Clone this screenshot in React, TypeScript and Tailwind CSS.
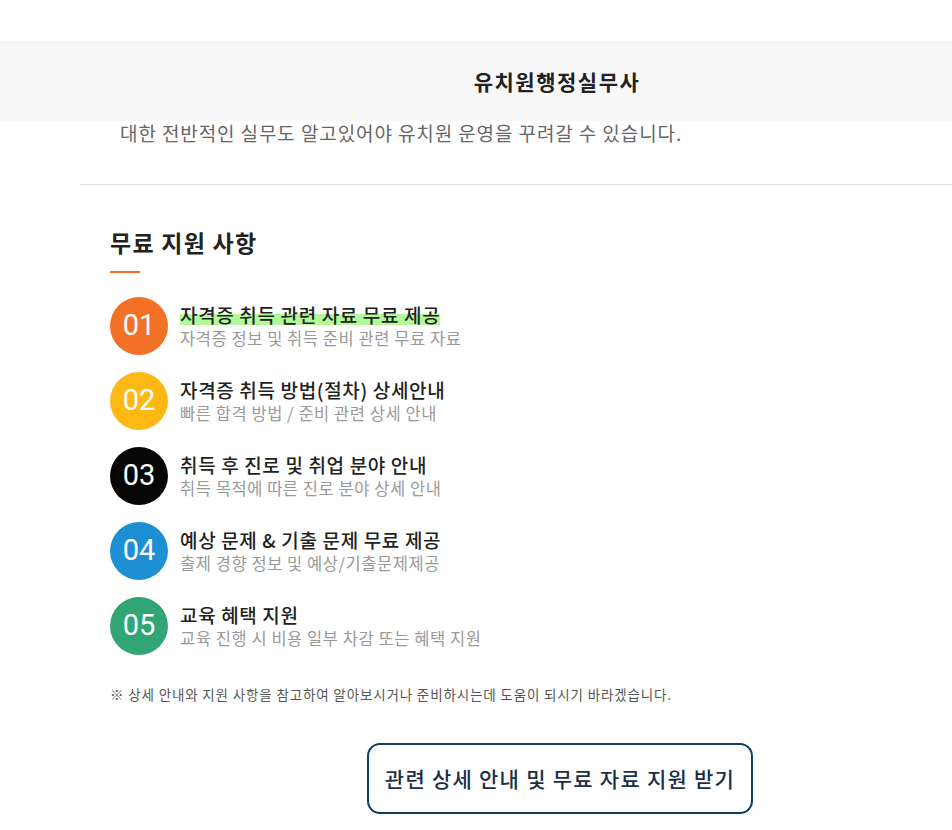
const items = [
  { no: "01", color: "bg-[#f37126]", title: "자격증 취득 관련 자료 무료 제공", sub: "자격증 정보 및 취득 준비 관련 무료 자료", mark: true },
  { no: "02", color: "bg-[#fdb913]", title: "자격증 취득 방법(절차) 상세안내", sub: "빠른 합격 방법 / 준비 관련 상세 안내" },
  { no: "03", color: "bg-[#060606]", title: "취득 후 진로 및 취업 분야 안내", sub: "취득 목적에 따른 진로 분야 상세 안내" },
  { no: "04", color: "bg-[#1e8fd2]", title: "예상 문제 & 기출 문제 무료 제공", sub: "출제 경향 정보 및 예상/기출문제제공" },
  { no: "05", color: "bg-[#32a574]", title: "교육 혜택 지원", sub: "교육 진행 시 비용 일부 차감 또는 혜택 지원" },
];

export default function App() {
  return (
    <div className="w-[952px] h-[830px] overflow-hidden bg-white font-['Noto_Sans_CJK_KR','Noto_Sans',sans-serif]">
      <div className="h-[43px] border-b border-[#eeeeee]" />
      {/* HEADER BAND */}
      <div className="h-[78px] bg-[#f8f8f8] flex items-center justify-center pl-[162px]">
        <div className="text-[21px] font-bold text-[#222] tracking-[1.5px]">유치원행정실무사</div>
      </div>
      {/* INTRO */}
      <div className="h-[63px] pl-[120px]">
        <p className="text-[19px] leading-[24px] text-[#666] tracking-[0.9px]">
          대한 전반적인 실무도 알고있어야 유치원 운영을 꾸려갈 수 있습니다.
        </p>
      </div>
      <div className="ml-[80px] border-t border-[#dddddd]" />
      {/* SECTION */}
      <div className="pl-[110px] pt-[41px]">
        <h2 className="text-[23px] leading-[32px] font-bold text-[#222] tracking-[1.25px]">무료 지원 사항</h2>
        <div className="mt-[13px] w-[30px] h-[2px] bg-[#f37126]" />
        <ul className="mt-[24px] flex flex-col gap-[17px]">
          {items.map((it) => (
            <li key={it.no} className="flex items-center gap-[12px]">
              <div
                className={`w-[58px] h-[58px] rounded-full ${it.color} flex items-center justify-center text-white text-[29px] font-['Roboto',sans-serif] font-normal`}
              >
                {it.no}
              </div>
              <div className="flex flex-col">
                <span
                  className={`text-[19px] leading-[24px] font-medium text-[#222] tracking-[0.65px] self-start ${
                    it.mark ? "bg-[linear-gradient(transparent_45%,#b3f99a_45%,#b3f99a_92%,transparent_92%)]" : ""
                  }`}
                >
                  {it.title}
                </span>
                <span className="text-[16.5px] leading-[22px] text-[#999] tracking-[0.55px]">{it.sub}</span>
              </div>
            </li>
          ))}
        </ul>
        <p className="mt-[29px] text-[13.5px] leading-[20px] text-[#555] tracking-[0.85px]">
          ※ 상세 안내와 지원 사항을 참고하여 알아보시거나 준비하시는데 도움이 되시기 바라겠습니다.
        </p>
        <div className="mt-[39px] ml-[257px] w-[386px] h-[71px] border-2 border-[#0e3f66] rounded-[13px] flex items-center justify-center">
          <span className="text-[21px] font-medium text-[#1b2f48] tracking-[1.25px]">관련 상세 안내 및 무료 자료 지원 받기</span>
        </div>
      </div>
    </div>
  );
}
